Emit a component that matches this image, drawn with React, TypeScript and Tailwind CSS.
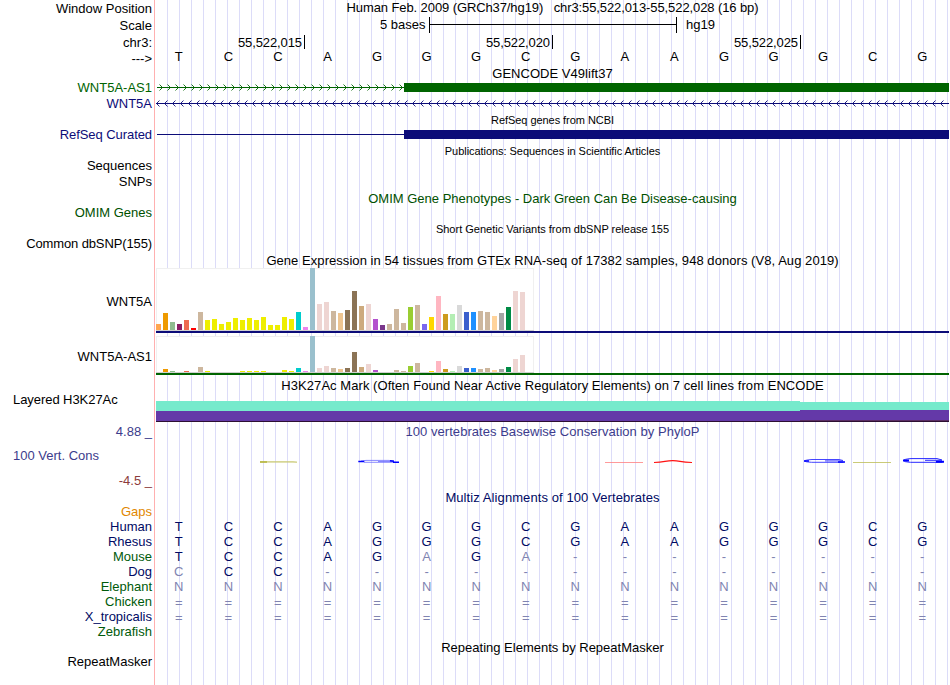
import clsx from "clsx";

interface Label {
  text: string;
  className: string;
}

const LABELS: Label[] = [
  { text: "Window Position", className: "mt-px" },
  { text: "Scale", className: "mt-[2px]" },
  { text: "chr3:", className: "mt-[2px]" },
  { text: "--->", className: "mt-px" },
  { text: "WNT5A-AS1", className: "mt-[14px] text-[#006400]" },
  { text: "WNT5A", className: "mt-px text-[#0c0c78]" },
  { text: "RefSeq Curated", className: "mt-4 tracking-[-0.07px] text-[#0c0c78]" },
  { text: "Sequences", className: "mt-4" },
  { text: "SNPs", className: "mt-px" },
  { text: "OMIM Genes", className: "mt-4 text-[#005000]" },
  { text: "Common dbSNP(155)", className: "mt-4 tracking-[-0.12px]" },
  { text: "WNT5A", className: "mt-[43px]" },
  { text: "WNT5A-AS1", className: "mt-10" },
  { text: "Layered H3K27Ac", className: "mt-7 self-start tracking-[-0.06px]" },
  { text: "4.88 _", className: "mt-[17px] text-[#3c3c8c]" },
  { text: "100 Vert. Cons", className: "mt-[9px] self-start text-[#3c3c8c]" },
  { text: "-4.5 _", className: "mt-[10px] text-[#8c3c3c]" },
  { text: "Gaps", className: "mt-4 text-[#e18700]" },
  { text: "Human", className: "text-[#000a64]" },
  { text: "Rhesus", className: "text-[#000a64]" },
  { text: "Mouse", className: "text-[#005a0a]" },
  { text: "Dog", className: "text-[#000a64]" },
  { text: "Elephant", className: "text-[#005a0a]" },
  { text: "Chicken", className: "text-[#005a0a]" },
  { text: "X_tropicalis", className: "text-[#000a64]" },
  { text: "Zebrafish", className: "text-[#005a0a]" },
  { text: "RepeatMasker", className: "mt-[15px]" },
];

const SEQUENCE = "TCCAGGGCGAAGGGCG";

const ALIGNMENTS = [
  "TCCAGGGCGAAGGGCG",
  "TCCAGGGCGAAGGGCG",
  "TCCAGAGA--------",
  "CCC-------------",
  "NNNNNNNNNNNNNNNN",
  "================",
  "================",
];

// color, WNT5A height, WNT5A-AS1 height
const TISSUES: [string, number, number][] = [
  ["#ffa54f", 6, 0],
  ["#ee9a00", 17, 3],
  ["#8fbc8f", 8, 1],
  ["#8b1c62", 6, 0],
  ["#ee6a50", 10, 1],
  ["#ff0000", 2, 0],
  ["#cdb79e", 18, 5],
  ["#eeee00", 10, 1],
  ["#eeee00", 11, 0],
  ["#eeee00", 6, 0],
  ["#eeee00", 8, 0],
  ["#eeee00", 12, 0],
  ["#eeee00", 10, 1],
  ["#eeee00", 12, 1],
  ["#eeee00", 10, 1],
  ["#eeee00", 13, 1],
  ["#eeee00", 5, 0],
  ["#eeee00", 5, 0],
  ["#eeee00", 13, 2],
  ["#eeee00", 11, 1],
  ["#00cdcd", 18, 4],
  ["#ee82ee", 3, 1],
  ["#9ac0cd", 62, 36],
  ["#eed5d2", 26, 4],
  ["#eed5d2", 28, 6],
  ["#cdb79e", 19, 4],
  ["#eec591", 17, 3],
  ["#8b7355", 20, 4],
  ["#8b7355", 39, 20],
  ["#cdaa7d", 24, 5],
  ["#eed5d2", 26, 8],
  ["#b452cd", 11, 2],
  ["#7a378b", 5, 0],
  ["#cdb79e", 6, 0],
  ["#cdb79e", 21, 2],
  ["#cdb79e", 7, 1],
  ["#9acd32", 23, 6],
  ["#cdb79e", 25, 9],
  ["#7a67ee", 6, 0],
  ["#ffd700", 13, 1],
  ["#ffb6c1", 34, 11],
  ["#cd9b1d", 16, 3],
  ["#b4eeb4", 16, 1],
  ["#d9d9d9", 25, 6],
  ["#3a5fcd", 18, 4],
  ["#1e90ff", 18, 4],
  ["#cdb79e", 19, 3],
  ["#cdb79e", 18, 4],
  ["#ffd39b", 14, 2],
  ["#a6a6a6", 17, 3],
  ["#008b45", 23, 5],
  ["#eed5d2", 39, 13],
  ["#eed5d2", 38, 17],
  ["#ff00ff", 0, 0],
];

function Title({ children, className }: { children: string; className?: string }) {
  return <div className={clsx("shrink-0 text-center whitespace-pre", className)}>{children}</div>;
}

function Bases({ text, reference }: { text: string; reference?: string }) {
  return (
    <div className="-ml-[2px] grid h-[15px] w-[793px] shrink-0 grid-cols-16 text-center">
      {text.split("").map((base, i) => (
        <span
          key={i}
          className={clsx(reference && reference[i] !== base && "text-[#8084b1]", base === "=" && "pt-px")}
        >
          {base}
        </span>
      ))}
    </div>
  );
}

function Intron({ width, color, arrow }: { width: number; color: string; arrow?: "left" | "right" }) {
  let d = "";
  for (let x = 0; arrow && x < width; x += 8) {
    d += arrow === "right" ? `M${x + 3.5} 1.5l3 3l-3 3` : `M${x + 3.5} 1.5l-3 3l3 3`;
  }
  return (
    <svg width={width} height="9" className="shrink-0" fill="none" stroke={color}>
      <path d={`M${arrow === "left" ? 0 : 1} 4.5H${width}`} />
      <path d={d} strokeWidth="0.9" />
    </svg>
  );
}

function Expression({ series, className }: { series: 1 | 2; className: string }) {
  return (
    <div
      className={clsx(
        "flex w-[378px] shrink-0 items-end gap-[2px] bg-white shadow-[inset_-1px_1px_#f0f0f0,inset_1px_0_#f0f0f0]",
        className,
      )}
    >
      {TISSUES.map((tissue, i) => (
        <div key={i} className="w-[5px]" style={{ height: tissue[series], backgroundColor: tissue[0] }} />
      ))}
    </div>
  );
}

function Conservation() {
  return (
    <svg width="793" height="51" className="shrink-0" fill="none">
      <path d="M104 22.600h33l4 0.600M104 23.200h37" stroke="#cccc7a" strokeWidth="0.8" />
      <path d="M104 23h7" stroke="#b4b43c" strokeWidth="1.5" />
      <path d="M205 22l5 -0.600h23l5 0.700M208 23.300h31M222 22.500h16" stroke="#6c6cff" strokeWidth="0.8" />
      <path d="M202.300 22.500h6M237 23.300h6M234 21.800l4 0.500" stroke="#00f" strokeWidth="1.4" />
      <path d="M449 23.500h38" stroke="#ff8080" strokeWidth="0.8" />
      <path d="M498 23.500q6 0 11 -1.100q8 -1.500 15 0q5 1.100 12 1.100" stroke="#f11" strokeWidth="1.1" />
      <path
        d="M687 21.500l-4 -1h-27q-7 0.500 -7.500 1.500q0.500 1 7 1.300h32M687 21.900h-18"
        stroke="#3030ff"
        strokeWidth="0.9"
      />
      <path d="M648 22h5M682 23h7" stroke="#00f" strokeWidth="1.600" />
      <path d="M697 23.500h38" stroke="#bcbc55" strokeWidth="0.8" />
      <path
        d="M786 21l-5 -1.400h-26q-7 0.500 -7.500 1.900q0.500 1.500 7 1.800h32M786 21.300h-17"
        stroke="#2828ff"
        strokeWidth="1"
      />
      <path d="M747 21.500h6M780 22.700h8" stroke="#00f" strokeWidth="2" />
    </svg>
  );
}

export default function App() {
  return (
    <main className="flex h-[685px] w-[950px] overflow-hidden bg-white font-['Liberation_Sans',Arial,sans-serif] text-[13px] leading-[15px] text-black">
      <div className="flex w-[154px] shrink-0 flex-col items-end pr-[2px] pl-[13px]">
        {LABELS.map((label, i) => (
          <div key={i} className={clsx("h-[15px] shrink-0 whitespace-nowrap", label.className)}>
            {label.text}
          </div>
        ))}
      </div>
      <div className="mr-px w-px shrink-0 bg-[#ffb0b0]" />

      <div className="flex w-[793px] shrink-0 flex-col bg-[repeating-linear-gradient(to_right,transparent_0,transparent_11px,#dcdcf8_11px,#dcdcf8_12px)]">
        <Title className="tracking-[-0.1px]">
          {"Human Feb. 2009 (GRCh37/hg19)   chr3:55,522,013-55,522,028 (16 bp)"}
        </Title>
        <div className="mt-[2px] flex h-4 shrink-0">
          <div className="w-[273px] pr-[3.5px] text-right">5 bases</div>
          <div className="flex w-[248px] items-center border-x border-black">
            <div className="-mt-px h-px w-full bg-black" />
          </div>
          <div className="pl-[9px]">hg19</div>
        </div>
        <div className="mt-[2px] flex h-[14px] shrink-0 text-right tracking-[-0.1px]">
          <div className="w-[149px] border-r border-black pr-[2px]">55,522,015</div>
          <div className="w-[248px] border-r border-black pr-[2px]">55,522,020</div>
          <div className="w-[248px] border-r border-black pr-[2px]">55,522,025</div>
        </div>
        <Bases text={SEQUENCE} />

        <Title className="mt-[2px] tracking-[0.03px]">GENCODE V49lift37</Title>
        <div className="mt-[2px] flex h-[9px] shrink-0">
          <Intron width={248} color="#006400" arrow="right" />
          <div className="flex-1 bg-[#006400]" />
        </div>
        <div className="mt-[7px] flex h-[9px] shrink-0">
          <Intron width={793} color="#0c0c78" arrow="left" />
        </div>

        <Title className="mt-[6px] text-[11px] leading-[13px] tracking-[-0.05px]">RefSeq genes from NCBI</Title>
        <div className="mt-[3px] flex h-[9px] shrink-0">
          <Intron width={248} color="#0c0c78" />
          <div className="flex-1 bg-[#0c0c78]" />
        </div>

        <Title className="mt-[6px] text-[11px] leading-[13px] tracking-[-0.05px]">
          Publications: Sequences in Scientific Articles
        </Title>
        <Title className="mt-[33px] text-[#005000]">
          OMIM Gene Phenotypes - Dark Green Can Be Disease-causing
        </Title>
        <Title className="mt-[17px] text-[11px] leading-[13px]">
          Short Genetic Variants from dbSNP release 155
        </Title>

        <Title className="mt-[17px] tracking-[0.055px]">
          Gene Expression in 54 tissues from GTEx RNA-seq of 17382 samples, 948 donors (V8, Aug 2019)
        </Title>
        <Expression series={1} className="h-[62px]" />
        <div className="h-px w-[378px] shrink-0 bg-[#d0d0d0]" />
        <div className="h-[2px] shrink-0 bg-[#0c0c78]" />
        <Expression series={2} className="mt-[3px] h-9" />
        <div className="h-px w-[378px] shrink-0 bg-[#d0d0d0]" />
        <div className="h-[2px] shrink-0 bg-[#006400]" />

        <Title className="mt-[3px] tracking-[0.055px]">
          H3K27Ac Mark (Often Found Near Active Regulatory Elements) on 7 cell lines from ENCODE
        </Title>
        <div className="mt-2 flex h-[21px] shrink-0 items-end">
          <div className="w-[644px]">
            <div className="h-[10px] bg-[#76eacc]" />
            <div className="h-[10px] bg-[#6439a8]" />
            <div className="h-px bg-[#2d0f32]" />
          </div>
          <div className="flex-1">
            <div className="h-2 bg-[#76eacc]" />
            <div className="h-[10px] bg-[#6439a8]" />
            <div className="h-px bg-[#5a2d64]" />
            <div className="h-px bg-[#2d0f32]" />
          </div>
        </div>

        <Title className="mt-[2px] tracking-[0.04px] text-[#3c3c8c]">
          100 vertebrates Basewise Conservation by PhyloP
        </Title>
        <Conservation />

        <Title className="tracking-[0.09px] text-[#000a64]">Multiz Alignments of 100 Vertebrates</Title>
        <div className="mt-[14px] text-[#000a64]">
          {ALIGNMENTS.map((row, i) => (
            <Bases key={i} text={row} reference={SEQUENCE} />
          ))}
        </div>

        <Title className="mt-4">Repeating Elements by RepeatMasker</Title>
      </div>
    </main>
  );
}
